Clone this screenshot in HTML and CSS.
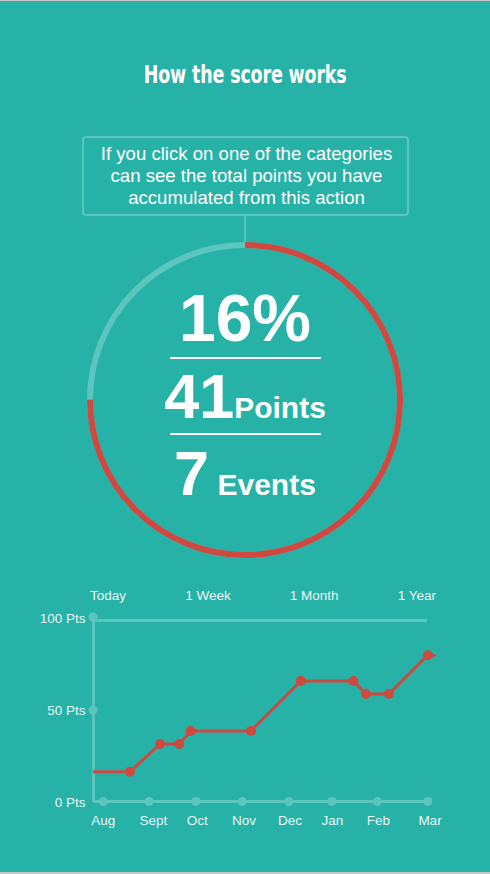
FILE: index.html
```html
<!DOCTYPE html>
<html lang="en">
<head>
<meta charset="utf-8">
<title>How the score works</title>
<link rel="stylesheet" href="styles.css">
</head>
<body>
<div class="screen">
  <h1 class="title">How the score works</h1>

  <div class="tip">If you click on one of the categories<br>can see the total points you have<br>accumulated from this action</div>
  <div class="connector"></div>

  <div class="gauge">
    <svg class="ring" width="316" height="316" viewBox="0 0 316 316">
      <circle class="ring-bg" cx="158" cy="158" r="155"/>
      <circle class="ring-fg" cx="158" cy="158" r="155" stroke-dasharray="730.4 973.9" transform="rotate(-90 158 158)"/>
    </svg>
    <div class="stats">
      <div class="stat stat-pct">16%</div>
      <div class="divider"></div>
      <div class="stat stat-num">41<span class="unit">Points</span></div>
      <div class="divider"></div>
      <div class="stat stat-num">7<span class="unit"> Events</span></div>
    </div>
  </div>

  <div class="tabs">
    <span class="tab">Today</span>
    <span class="tab">1 Week</span>
    <span class="tab">1 Month</span>
    <span class="tab">1 Year</span>
  </div>

  <svg class="chart" width="490" height="232" viewBox="0 604 490 232">
    <g class="axis">
      <line x1="93.5" y1="620.5" x2="427" y2="620.5"/>
      <line x1="93.5" y1="619" x2="93.5" y2="802"/>
      <line x1="93.5" y1="801.5" x2="429" y2="801.5"/>
    </g>
    <g class="axis-dots">
      <circle cx="93" cy="617" r="4.5"/>
      <circle cx="93" cy="710" r="4.5"/>
      <circle cx="103.3" cy="801.5" r="4.5"/>
      <circle cx="149" cy="801.5" r="4.5"/>
      <circle cx="195.7" cy="801.5" r="4.5"/>
      <circle cx="242.3" cy="801.5" r="4.5"/>
      <circle cx="289" cy="801.5" r="4.5"/>
      <circle cx="331.7" cy="801.5" r="4.5"/>
      <circle cx="377.3" cy="801.5" r="4.5"/>
      <circle cx="427.7" cy="801.5" r="4.5"/>
    </g>
    <g class="ylabels">
      <text x="85.5" y="622.5">100 Pts</text>
      <text x="85.5" y="715">50 Pts</text>
      <text x="85.5" y="806.5">0 Pts</text>
    </g>
    <g class="xlabels">
      <text x="103.3" y="825">Aug</text>
      <text x="153.3" y="825">Sept</text>
      <text x="197.3" y="825">Oct</text>
      <text x="244" y="825">Nov</text>
      <text x="290" y="825">Dec</text>
      <text x="332.3" y="825">Jan</text>
      <text x="378.3" y="825">Feb</text>
      <text x="430" y="825">Mar</text>
    </g>
    <polyline class="series" points="93,771.7 130,771.7 160,744 179.3,744 190.7,731 251,731 300.7,681 353.3,681 366,694 389,694 427.7,655.3"/>
    <g class="series-dots">
      <circle cx="130" cy="771.7" r="5"/>
      <circle cx="160" cy="744" r="5"/>
      <circle cx="179.3" cy="744" r="5"/>
      <circle cx="190.7" cy="731" r="5"/>
      <circle cx="251" cy="731" r="5"/>
      <circle cx="300.7" cy="681" r="5"/>
      <circle cx="353.3" cy="681" r="5"/>
      <circle cx="366" cy="694" r="5"/>
      <circle cx="389" cy="694" r="5"/>
      <circle cx="427.7" cy="655.3" r="5"/>
      <polygon points="427,650.2 436.8,655.4 427,660.6"/>
    </g>
  </svg>
</div>
</body>
</html>
```
FILE: styles.css
```css
html, body {
  margin: 0;
  padding: 0;
}

body {
  background: #c7c7c7;
  font-family: "Liberation Sans", Arial, sans-serif;
  color: #ffffff;
}

.screen {
  margin-top: 1px;
  height: 871px;
  background: #27b2a8;
  display: flex;
  flex-direction: column;
  align-items: center;
  overflow: hidden;
}

.title {
  margin: 0;
  padding-top: 58.6px;
  font-family: "DejaVu Sans Condensed", "Liberation Sans Narrow", sans-serif;
  font-weight: bold;
  font-size: 24px;
  line-height: 30px;
  letter-spacing: -0.2px;
  text-align: center;
  transform: scaleX(0.81);
}

.tip {
  box-sizing: border-box;
  margin-top: 46.4px;
  width: 327px;
  height: 80px;
  border: 2px solid #5cc5be;
  border-radius: 4px;
  padding: 5.3px 0 0 3px;
  font-size: 18.6px;
  line-height: 22px;
  text-align: center;
}

.connector {
  width: 2px;
  height: 26px;
  background: #5cc5be;
}

.gauge {
  display: grid;
  width: 316px;
  height: 316px;
}

.ring,
.stats {
  grid-area: 1 / 1;
}

.ring-bg,
.ring-fg {
  fill: none;
  stroke-width: 6;
}

.ring-bg {
  stroke: #5cc5be;
}

.ring-fg {
  stroke: #cf4940;
}

.stats {
  display: flex;
  flex-direction: column;
  align-items: center;
  padding-top: 46.4px;
  font-weight: bold;
}

.stat-pct {
  font-size: 66px;
  line-height: 60px;
  height: 60px;
}

.stat-num {
  font-size: 63px;
  line-height: 56px;
  height: 56px;
  white-space: pre;
}

.unit {
  font-size: 30px;
  line-height: 30px;
}

.divider {
  width: 151px;
  height: 2px;
  background: #ffffff;
}

.stat-pct + .divider {
  margin-top: 8.6px;
}

.divider + .stat-num {
  margin-top: 8.8px;
}

.stat-num + .divider {
  margin-top: 9.2px;
}

.divider + .stat-num + .divider + .stat-num {
  margin-top: 9.8px;
}

.tabs {
  box-sizing: border-box;
  width: 490px;
  margin-top: 30.2px;
  padding: 0 54px 0 90px;
  display: flex;
  justify-content: space-between;
  font-size: 13.5px;
  line-height: 16px;
  color: rgba(255, 255, 255, 0.92);
}

.chart {
  display: block;
}

.axis line {
  stroke: #5cc5be;
  stroke-width: 3;
}

.axis-dots circle {
  fill: #5cc5be;
}

.ylabels text,
.xlabels text {
  fill: rgba(255, 255, 255, 0.92);
  font-family: "Liberation Sans", Arial, sans-serif;
  font-size: 13.5px;
}

.ylabels text {
  text-anchor: end;
}

.xlabels text {
  text-anchor: middle;
}

.series {
  fill: none;
  stroke: #cf4940;
  stroke-width: 3;
  stroke-linejoin: round;
}

.series-dots circle,
.series-dots polygon {
  fill: #cf4940;
}
```
